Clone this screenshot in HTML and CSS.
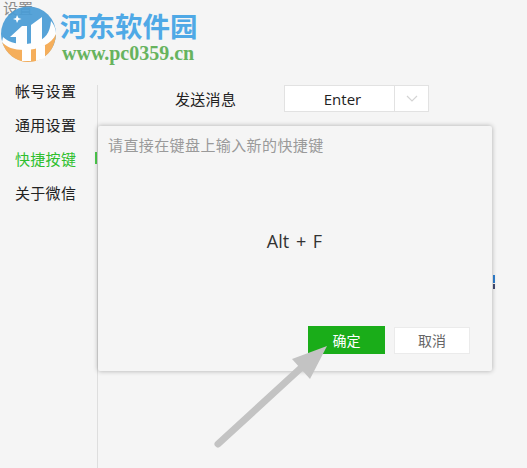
FILE: index.html
```html
<!DOCTYPE html>
<html lang="zh-CN">
<head>
    <meta charset="UTF-8">
    <title>设置</title>
    <link rel="stylesheet" href="styles.css">
</head>
<body>
    <div class="window">
        <div class="title">设置</div>
        <div class="layout">
            <div class="sidebar">
                <div class="nav-item">帐号设置</div>
                <div class="nav-item">通用设置</div>
                <div class="nav-item active">快捷按键</div>
                <div class="nav-item">关于微信</div>
            </div>
            <div class="content">
                <div class="row">
                    <div class="row-label">发送消息</div>
                    <div class="select">
                        <div class="select-value">Enter</div>
                        <div class="select-arrow">
                            <svg width="12" height="7" viewBox="0 0 12 7"><path d="M1 1l5 5 5-5" fill="none" stroke="#d4d4d4" stroke-width="1.2"/></svg>
                        </div>
                    </div>
                </div>
            </div>
        </div>

        <div class="peek"></div>

        <div class="dialog">
            <div class="dialog-hint">请直接在键盘上输入新的快捷键</div>
            <div class="dialog-keys">Alt + F</div>
            <div class="dialog-actions">
                <button type="button" class="btn btn-ok">确定</button>
                <button type="button" class="btn btn-cancel">取消</button>
            </div>
        </div>

        <!-- arrow drawn over the screenshot -->
        <svg class="arrow" width="527" height="468" viewBox="0 0 527 468">
            <path d="M218 444L302 367" fill="none" stroke="#c3c3c3" stroke-width="7" stroke-linecap="round"/>
            <path d="M327 346L292 359L310 379Z" fill="#c3c3c3"/>
        </svg>

        <!-- watermark -->
        <div class="watermark">
            <svg class="wm-logo" width="57" height="64" viewBox="0 0 57 64">
                <circle cx="28.5" cy="34" r="27.5" fill="#4a9dd6"/>
                <path d="M2 42C6 54 16 62 28 62C44 62 56 50 56 32C50 42 36 48 22 47C12 46 6 45 2 42Z" fill="#f6a94f"/>
                <path d="M3 37C10 44 24 46 36 42C45 39 50 33 51 21C55 26 56 30 56 34C52 44 38 50 24 50C14 50 6 47 2 42Z" fill="#fff"/>
                <path d="M10 37L22 26H27V47H16V37Z" fill="#fff"/>
                <path d="M31 25L42 17V44L31 46Z" fill="#fff"/>
                <path d="M22 48H31V61H22Z" fill="#fff"/>
                <path d="M36 47L45 45V58L36 61Z" fill="#fff"/>
                <path d="M17 15l1.5 3 3 1-3 1-1.5 3-1-3-3-1 3-1Z" fill="#fff"/>
            </svg>
            <div class="wm-text">
                <div class="wm-name">河东软件园</div>
                <div class="wm-url">www.pc0359.cn</div>
            </div>
        </div>
    </div>
</body>
</html>
```

FILE: styles.css
```css
* { margin: 0; padding: 0; box-sizing: border-box; }
body {
    font-family: "Noto Sans CJK SC", "Noto Sans", sans-serif;
    background-color: #f5f5f5;
    overflow: hidden;
}
.window {
    position: relative;
    width: 527px;
    height: 468px;
    display: flex;
    flex-direction: column;
    overflow: hidden;
}
.title {
    height: 74px;
    padding: 0 0 0 3px;
    font-size: 15px;
    line-height: 16px;
    color: #8a8a8a;
}
.layout {
    flex: 1;
    display: flex;
}
.sidebar {
    width: 97px;
}
.nav-item {
    height: 34px;
    line-height: 34px;
    padding-left: 15px;
    font-size: 15px;
    letter-spacing: 0.3px;
    color: #222;
}
.nav-item.active {
    color: #2fbf2f;
    position: relative;
}
.nav-item.active::after {
    content: '';
    position: absolute;
    left: 95px;
    top: 10px;
    width: 2px;
    height: 12px;
    background-color: #4ccb4c;
}
.content {
    flex: 1;
    margin-top: 11px;
    padding-left: 77px;
    border-left: 1px solid #dedede;
}
.row {
    display: flex;
    align-items: center;
    gap: 47px;
}
.row-label {
    font-size: 15px;
    letter-spacing: 0.3px;
    color: #222;
    width: 62px;
}
.select {
    width: 145px;
    height: 27px;
    display: flex;
    background-color: #fff;
    border: 1px solid #e2e2e2;
}
.select-value {
    flex: 1;
    padding-left: 6px;
    text-align: center;
    font-family: "Open Sans", sans-serif;
    font-size: 15px;
    line-height: 26px;
    color: #222;
    border-right: 1px solid #e2e2e2;
}
.select-arrow {
    width: 33px;
    display: flex;
    align-items: center;
    justify-content: center;
}
.peek {
    position: absolute;
    left: 493px;
    top: 275px;
    width: 2px;
    height: 14px;
    background: linear-gradient(#2f7fd0 0 55%, #f5f5f5 55% 65%, #444a70 65%);
}
.dialog {
    position: absolute;
    left: 98px;
    top: 126px;
    width: 394px;
    height: 245px;
    display: flex;
    flex-direction: column;
    padding: 9px 22px 17px 10px;
    background-color: #f5f5f5;
    border-radius: 2px;
    box-shadow: 0 0 5px rgba(0,0,0,0.3);
}
.dialog-hint {
    font-size: 15px;
    letter-spacing: 0.4px;
    line-height: 20px;
    color: #9a9a9a;
}
.dialog-keys {
    flex: 1;
    display: flex;
    align-items: center;
    justify-content: center;
    padding-left: 11px;
    font-family: "Open Sans", sans-serif;
    font-size: 18px;
    word-spacing: 2px;
    color: #333;
}
.dialog-actions {
    display: flex;
    justify-content: flex-end;
    align-items: center;
    gap: 9px;
}
.btn {
    width: 77px;
    height: 28px;
    border: none;
    font-family: inherit;
    font-size: 14px;
}
.btn-ok {
    background-color: #1aad19;
    color: #fff;
}
.btn-cancel {
    width: 76px;
    height: 27px;
    background-color: #fff;
    color: #666;
    border: 1px solid #ebebeb;
}
.arrow {
    position: absolute;
    left: 0;
    top: 0;
    pointer-events: none;
}
.watermark {
    position: absolute;
    left: 0;
    top: 0;
    display: flex;
    gap: 3px;
}
.wm-logo {
    opacity: 0.92;
}
.wm-text {
    padding-top: 5px;
}
.wm-name {
    font-size: 27.5px;
    font-weight: 700;
    line-height: 40px;
    color: #4fa9e6;
}
.wm-url {
    font-family: "Liberation Serif", serif;
    font-size: 20px;
    font-weight: 700;
    line-height: 17px;
    color: #67b35e;
    padding-left: 2px;
}
```
